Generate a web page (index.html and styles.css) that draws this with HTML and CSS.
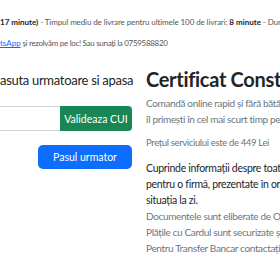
FILE: index.html
```html
<!DOCTYPE html>
<html lang="ro">
<head>
    <meta charset="UTF-8">
    <meta name="viewport" content="width=device-width, initial-scale=1.0">
    <link rel="stylesheet" href="styles.css">
</head>
<body>
    <div class="notice">
        <p class="notice-line"><b>17 minute)</b> - Timpul mediu de livrare pentru ultimele 100 de livrari: <b>8 minute</b> - Durata</p>
        <p class="notice-line tight"><a href="#">tsApp</a> şi rezolvăm pe loc! Sau sunaţi la 0759588820</p>
    </div>
    <div class="row">
        <div class="col-form">
            <p class="lead">asuta urmatoare si apasa</p>
            <div class="input-group">
                <input class="cui-input" type="text">
                <button class="btn btn-green">Valideaza CUI</button>
            </div>
            <div class="actions">
                <button class="btn btn-blue">Pasul urmator</button>
            </div>
        </div>
        <div class="col-info">
            <h1 class="title">Certificat Constatator</h1>
            <p class="muted">Comandă online rapid și fără bătăi de cap,<br>îl primești în cel mai scurt timp pe email.</p>
            <p class="muted price">Prețul serviciului este de 449 Lei</p>
            <p class="desc">Cuprinde informații despre toate datele înregistrate<br>pentru o firmă, prezentate în ordine cronologică,<br>situația la zi.</p>
            <p class="muted">Documentele sunt eliberate de ONRC<br>Plățile cu Cardul sunt securizate și procesate<br>Pentru Transfer Bancar contactați-ne</p>
        </div>
    </div>
</body>
</html>
```

FILE: styles.css
```css
body {
    margin: 0;
    background-color: #fff;
    font-family: Lato, sans-serif;
    color: #212529;
    overflow: hidden;
    width: 280px;
}
p {
    margin: 0;
}
.notice {
    padding-top: 16px;
}
.notice-line {
    font-size: 8px;
    line-height: 13px;
    letter-spacing: -0.1px;
    color: #555;
    white-space: nowrap;
    margin-bottom: 8px;
}
.notice-line.tight {
    letter-spacing: -0.3px;
}
.notice-line b {
    color: #212529;
    letter-spacing: 0;
}
.notice-line a {
    color: #0d6efd;
    letter-spacing: 0;
}
.row {
    display: flex;
    gap: 14px;
    margin-top: 12px;
}
.col-form {
    width: 132px;
    flex: none;
}
.lead {
    font-size: 13px;
    line-height: 20px;
    letter-spacing: -0.3px;
    white-space: nowrap;
    margin-top: 8px;
}
.input-group {
    display: flex;
    margin-top: 16px;
}
.cui-input {
    width: 60px;
    height: 25px;
    box-sizing: border-box;
    border: 1px solid #ced4da;
    border-left: none;
    border-right: none;
    margin: 0;
    padding: 0;
}
.btn {
    border: none;
    color: #fff;
    font-family: Lato, sans-serif;
    font-size: 10.5px;
    height: 25px;
    padding: 0;
    margin: 0;
}
.btn-green {
    background-color: #198754;
    width: 72px;
    border-radius: 0 4px 4px 0;
}
.actions {
    display: flex;
    justify-content: flex-end;
    margin-top: 14px;
}
.btn-blue {
    background-color: #0d6efd;
    width: 94px;
    height: 24px;
    border-radius: 5px;
}
.col-info {
    flex: 1;
    min-width: 0;
    white-space: nowrap;
    overflow: hidden;
    padding-top: 3px;
}
.title {
    font-size: 20px;
    line-height: 28px;
    font-weight: 700;
    letter-spacing: -0.3px;
    margin: 0 0 2px;
}
.muted {
    color: #6c757d;
    font-size: 10px;
    line-height: 16px;
    letter-spacing: -0.35px;
}
.price {
    font-size: 9.5px;
    margin-top: 8px;
}
.desc {
    font-size: 10.5px;
    line-height: 16px;
    letter-spacing: -0.3px;
    margin-top: 9px;
}
```
